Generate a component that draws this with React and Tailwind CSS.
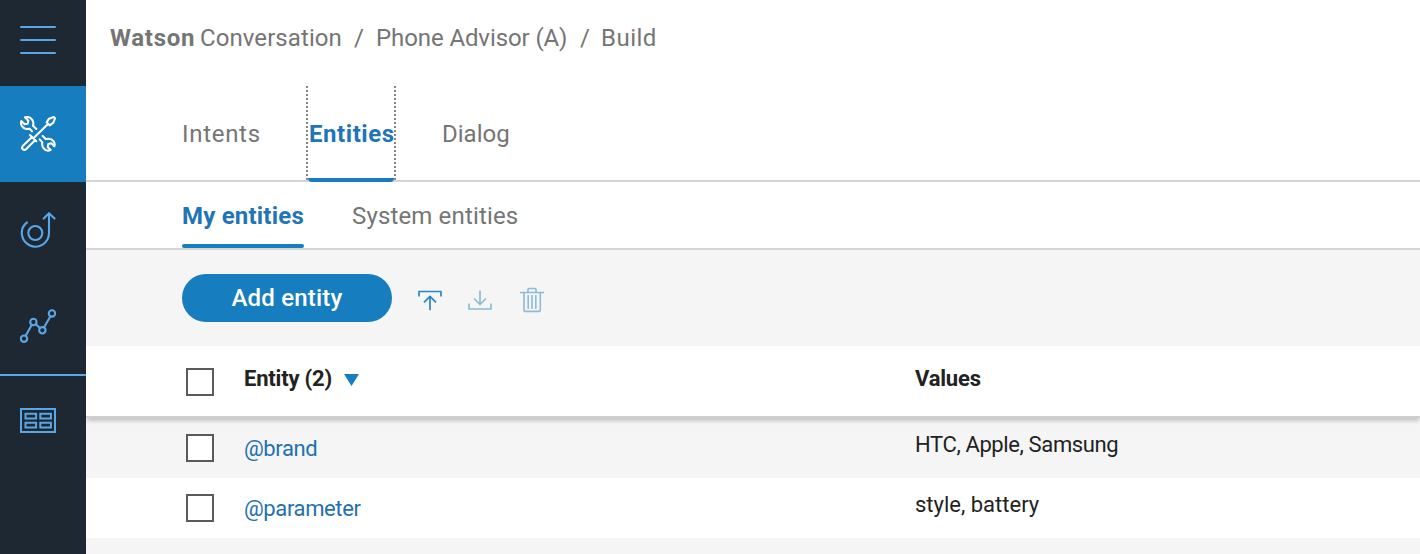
function ToolsIcon() {
  return (
    <svg className="h-9 w-9" viewBox="0 0 108 108" fill="none" stroke="#fff" strokeWidth="6.2" strokeLinecap="round" strokeLinejoin="round">
      <path d="M49 39 L39 29 C43 17 35 4 23 3 L15 4 L25 14 L23 23 L14 25 L4 15 C0 26 9 39 21 39 L29 38 L36 46" />
      <path d="M59 70 L67 79 C64 91 72 103 84 104 L92 102 L83 93 L85 84 L94 82 L103 91 C107 80 98 68 86 68 L77 69 L68 60" />
      <path d="M44 63 L84 24 M80 19 L87 8 L101 3 L105 7 L100 20 L89 28 Z" />
      <path d="M30 57 L49 76 M36 63 L9 89 C2 97 11 106 19 99 L45 73" />
    </svg>
  );
}

function ImproveIcon() {
  return (
    <svg className="h-10 w-9" viewBox="20 210 36 40" fill="none" stroke="#5aa7e8" strokeWidth="2.1" strokeLinecap="round" strokeLinejoin="round">
      <circle cx="35.3" cy="233" r="7" />
      <path d="M27 222.3 A13.6 13.6 0 1 0 49 233 V213.3 M43.7 218.6 L49 213.3 L54.5 218.6" />
    </svg>
  );
}

function GraphIcon() {
  return (
    <svg className="h-9 w-9" viewBox="20 308 36 36" fill="none" stroke="#5aa7e8" strokeWidth="2.1">
      <circle cx="24" cy="338.7" r="3.2" />
      <circle cx="33.4" cy="322" r="3.2" />
      <circle cx="42.4" cy="330.3" r="3.2" />
      <circle cx="52" cy="313.4" r="3.2" />
      <path d="M25.7 335.8 L31.8 324.8 M35.8 324.2 L40 328.1 M44 327.5 L50.4 316.2" />
    </svg>
  );
}

function CardsIcon() {
  return (
    <svg className="h-[25px] w-9" viewBox="0 0 36 25" fill="none" stroke="#5aa7e8" strokeWidth="2">
      <rect x="1" y="1" width="34" height="23" />
      <path d="M5.5 5.8h10.6v4.6H5.5z M20.3 5.8h10.6v4.6H20.3z M5.5 14.8h10.6v4.6H5.5z M20.3 14.8h10.6v4.6H20.3z" />
    </svg>
  );
}

function Sidebar() {
  return (
    <nav className="flex w-[86px] shrink-0 flex-col bg-[#1d2832]">
      <div className="flex h-[86px] flex-col gap-[11px] pt-[26px] pl-5">
        <span className="h-0.5 w-9 rounded-full bg-[#5aa7e8]" />
        <span className="h-0.5 w-9 rounded-full bg-[#5aa7e8]" />
        <span className="h-0.5 w-9 rounded-full bg-[#5aa7e8]" />
      </div>
      <div className="h-24 bg-[#167dbf] pt-[30px] pl-5"><ToolsIcon /></div>
      <div className="h-24 pt-7 pl-5"><ImproveIcon /></div>
      <div className="h-[98px] border-b-2 border-[#5aa7e8] pt-[30px] pl-5"><GraphIcon /></div>
      <div className="pt-8 pl-5"><CardsIcon /></div>
    </nav>
  );
}

function Checkbox() {
  return <span className="block h-7 w-7 shrink-0 border-2 border-[#5a5a5a] bg-white" />;
}

function Row({ name, values, tint, valueSpacing }) {
  return (
    <div className={`flex h-[60px] pl-[100px] text-[22px] leading-[26px] ${tint}`}>
      <div className="w-[58px] pt-4"><Checkbox /></div>
      <div className="w-[671px] pt-[18px] tracking-[-0.38px] text-[#1f70b0]">{name}</div>
      <div className={`pt-[14px] text-[#222] ${valueSpacing}`}>{values}</div>
    </div>
  );
}

export default function App() {
  return (
    <div className="flex h-[554px] w-[1420px] overflow-hidden bg-white font-['Roboto',sans-serif] whitespace-nowrap">
      <Sidebar />
      <main className="min-w-0 flex-1">
        <header className="flex h-[86px] pt-6 pl-6 text-2xl leading-7 text-[#757575]">
          <span className="w-[90px] font-bold tracking-[0.7px]">Watson</span>
          <span className="w-[154px] tracking-[0.08px]">Conversation</span>
          <span className="w-[22px]">/</span>
          <span className="w-[204px] tracking-[-0.1px]">Phone Advisor (A)</span>
          <span className="w-[21px]">/</span>
          <span className="tracking-[0.5px]">Build</span>
        </header>
        <div className="flex h-24 border-b-2 border-[#d5d5d5] pl-24 text-2xl leading-7 text-[#757575]">
          <span className="w-[124px] pt-[34px] tracking-[0.7px]">Intents</span>
          <span className="flex h-24 w-[90px] justify-between">
            <svg className="h-[94px] w-0.5" viewBox="0 0 2 94"><path d="M1 0V94" stroke="#858585" strokeWidth="2" strokeDasharray="2 2" /></svg>
            <span className="h-24 w-[86px] rounded-b-sm border-b-4 border-[#167dbf] pt-[34px] pl-px font-bold tracking-[0.55px] text-[#1f75b5]">Entities</span>
            <svg className="h-[94px] w-0.5" viewBox="0 0 2 94"><path d="M1 0V94" stroke="#858585" strokeWidth="2" strokeDasharray="2 2" /></svg>
          </span>
          <span className="pt-[34px] pl-[46px]">Dialog</span>
        </div>
        <div className="flex h-[68px] gap-12 border-b-2 border-[#d5d5d5] pl-24 text-2xl leading-7 text-[#757575]">
          <span className="flex h-[66px] w-[122px] flex-col justify-between pt-5 font-bold tracking-[0.2px] text-[#1f75b5]">
            My entities
            <span className="h-1 rounded-full bg-[#167dbf]" />
          </span>
          <span className="pt-5 tracking-[0.15px]">System entities</span>
        </div>
        <div className="flex h-24 bg-[#f5f5f5] pt-6 pl-24">
          <button className="h-12 w-[210px] rounded-full bg-[#167dbf] text-2xl leading-[46px] font-medium tracking-[0.2px] text-white">Add entity</button>
          <svg className="mt-[15px] ml-[26px] h-[22px] w-6" viewBox="0 0 24 22" fill="none" stroke="#2a86c2" strokeWidth="1.7" strokeLinejoin="round">
            <path d="M1 7.5V2.5H23V7.5 M12 21.3V7.3 M6 13.3L12 7.3L18 13.3" />
          </svg>
          <svg className="mt-[15px] ml-[26px] h-[22px] w-6" viewBox="0 0 24 22" fill="none" stroke="#8bbbd9" strokeWidth="1.7" strokeLinejoin="round">
            <path d="M1 14.5V20H23V14.5 M12 1.5V15.5 M6 9.5L12 15.5L18 9.5" />
          </svg>
          <svg className="mt-[13px] ml-7 h-[26px] w-6" viewBox="0 0 24 26" fill="none" stroke="#8bbbd9" strokeWidth="1.6">
            <path d="M0 5.5H24 M4 5.5V23.2Q4 24.4 5 24.4H19Q20.3 24.4 20.3 23.2V5.5 M8 5V2.5Q8 1.5 9 1.5H15Q16 1.5 16 2.5V5 M8.2 8V22 M12 8V22 M15.8 8V22" />
          </svg>
        </div>
        <div className="relative flex h-[72px] border-b-2 border-[#cfcfcf] bg-white pl-[100px] text-[22px] leading-[26px] font-bold tracking-[-0.2px] text-[#222] shadow-[0_4px_4px_-1px_rgba(0,0,0,0.2)]">
          <div className="w-[58px] pt-[22px]"><Checkbox /></div>
          <div className="flex w-[671px] pt-[20px]">
            <span className="w-[100px]">Entity (2)</span>
            <svg className="mt-[8px] h-3 w-[15px]" viewBox="0 0 15 12"><path d="M0 0H15L7.5 12Z" fill="#167dbf" /></svg>
          </div>
          <div className="pt-[20px]">Values</div>
        </div>
        <Row name="@brand" values="HTC, Apple, Samsung" tint="bg-[#f5f5f5]" valueSpacing="tracking-[-0.38px]" />
        <Row name="@parameter" values="style, battery" tint="bg-white" valueSpacing="tracking-normal" />
        <div className="h-4 bg-[#f5f5f5]" />
      </main>
    </div>
  );
}
